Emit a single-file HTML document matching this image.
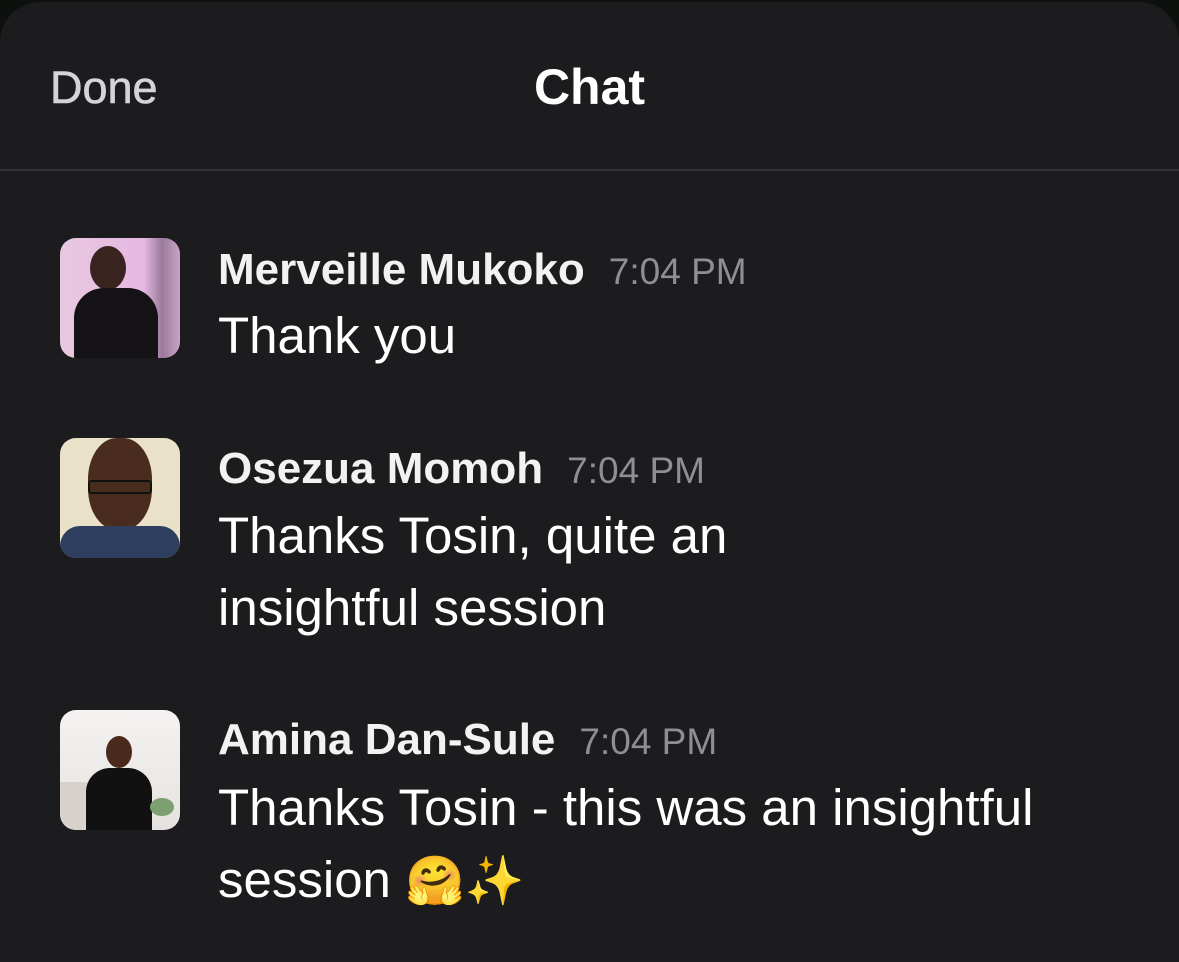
<!DOCTYPE html>
<html><head><meta charset="utf-8"><style>
html,body{margin:0;padding:0;background:#0d110d;width:1179px;height:940px;overflow:hidden}
.sheet{position:absolute;left:0;top:2px;width:1179px;height:960px;background:#1c1b1e;border-radius:40px 40px 0 0;font-family:"Liberation Sans",sans-serif}
.t{position:absolute;white-space:nowrap;line-height:1}
.done{left:50px;top:63px;font-size:45px;color:#d4d4d6;-webkit-text-stroke:0.6px #d4d4d6}
.chat{left:0;width:1179px;text-align:center;top:60px;font-size:50px;font-weight:bold;color:#fff}
.div{position:absolute;left:0;right:0;top:167px;height:2px;background:#353438}
.av{position:absolute;left:60px;width:120px;height:120px;border-radius:16px;overflow:hidden}
.name{font-size:44px;font-weight:bold;color:#f2f2f2}
.time{font-size:37px;color:#8e8e93;font-weight:normal;margin-left:24px}
.msg{font-size:51px;color:#fff;line-height:72px}
</style></head><body><div class="sheet">
<div class="t done">Done</div>
<div class="t chat">Chat</div>
<div class="div"></div>

<div class="av" style="top:236px;background:linear-gradient(90deg,#e8c8e0 0%,#e6b8e2 70%,#9a7a9c 85%,#c9a3c8 100%)">
<div style="position:absolute;left:30px;top:8px;width:36px;height:44px;border-radius:50%;background:#3a2420"></div>
<div style="position:absolute;left:14px;top:50px;width:84px;height:80px;border-radius:30px 30px 0 0;background:#141214"></div>
</div>
<div class="t name" style="left:218px;top:246px">Merveille Mukoko<span class="time">7:04 PM</span></div>
<div class="t msg" style="left:218px;top:298px">Thank you</div>

<div class="av" style="top:436px;background:#e9e2c8">
<div style="position:absolute;left:28px;top:0px;width:64px;height:92px;border-radius:45%;background:#4a2c1f"></div>
<div style="position:absolute;left:28px;top:42px;width:64px;height:14px;border:2px solid #111;box-sizing:border-box;border-radius:4px"></div>
<div style="position:absolute;left:0;top:88px;width:120px;height:40px;border-radius:20px 20px 0 0;background:#2d3e5e"></div>
</div>
<div class="t name" style="left:218px;top:445px">Osezua Momoh<span class="time">7:04 PM</span></div>
<div class="t msg" style="left:218px;top:498px">Thanks Tosin, quite an<br>insightful session</div>

<div class="av" style="top:708px;background:linear-gradient(180deg,#f4f3f2,#e6e2df)">
<div style="position:absolute;left:0;top:72px;width:50px;height:48px;background:#d8d2cc"></div>
<div style="position:absolute;left:46px;top:26px;width:26px;height:32px;border-radius:50%;background:#4a2a1c"></div>
<div style="position:absolute;left:26px;top:58px;width:66px;height:62px;border-radius:24px 24px 0 0;background:#111"></div>
<div style="position:absolute;left:90px;top:88px;width:24px;height:18px;border-radius:50%;background:#7ea070"></div>
</div>
<div class="t name" style="left:218px;top:716px">Amina Dan-Sule<span class="time">7:04 PM</span></div>
<div class="t msg" style="left:218px;top:770px">Thanks Tosin - this was an insightful<br>session <span style="font-size:48px">🤗✨</span></div>
</div></body></html>
